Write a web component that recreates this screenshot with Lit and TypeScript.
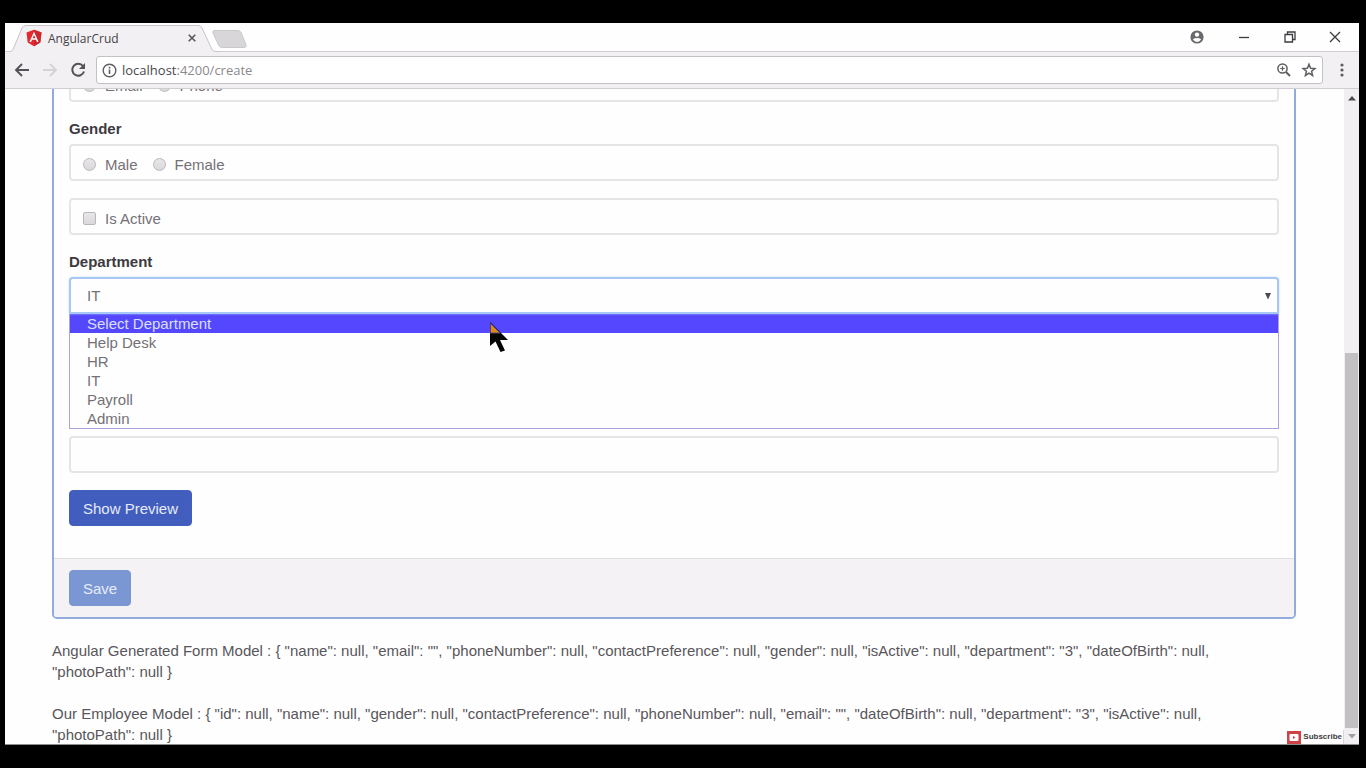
import { LitElement, html, css } from "lit";
import { customElement, property, state } from "lit/decorators.js";

@customElement("browser-bar")
class BrowserBar extends LitElement {
  static styles = css`
    :host {
      display: block;
      flex: none;
      font-family: "Open Sans", "Noto Sans", sans-serif;
    }
    svg {
      display: block;
    }
    button {
      padding: 0;
      border: 0;
      background: none;
      font: inherit;
      color: inherit;
      flex: none;
    }
    .strip {
      display: flex;
      align-items: flex-end;
      height: 28px;
      background: #fefefe;
      border-bottom: 1px solid #cfcdd0;
    }
    .tab {
      position: relative;
      width: 210px;
      height: 28px;
      margin: 0 0 -1px 5px;
    }
    .shape {
      position: absolute;
      inset: 0;
    }
    .tab-row {
      position: relative;
      display: flex;
      align-items: center;
      gap: 6px;
      height: 28px;
      padding: 0 24px 0 16px;
      font-size: 12px;
      color: #454347;
    }
    .title {
      flex: 1;
    }
    .new-tab {
      margin: 0 0 3px -8px;
    }
    .controls {
      display: flex;
      align-items: center;
      gap: 33px;
      height: 28px;
      margin-left: auto;
      padding-right: 18px;
    }
    .toolbar {
      display: flex;
      align-items: center;
      gap: 12px;
      height: 36px;
      padding: 0 10px 0 9px;
      background: #f2f0f3;
      border-bottom: 1px solid #cfcdd0;
    }
    .address {
      display: flex;
      align-items: center;
      gap: 5px;
      flex: 1;
      height: 26px;
      margin: 0 0 0 -2px;
      padding: 0 5px;
      background: #fff;
      border: 1px solid #c3c1c5;
      border-radius: 3px;
    }
    .url {
      flex: 1;
      font-size: 13px;
      color: #8b898d;
    }
    .host {
      color: #4a484c;
    }
    .address .star {
      margin-left: 5px;
    }
  `;

  render() {
    return html`
      <div class="strip">
        <div class="tab">
          <svg class="shape" width="210" height="28" viewBox="0 0 210 28">
            <path d="M0 27.500 Q2 27.500 3 25.500 L12 4 Q13.500 1.500 16 1.500 H188 Q191 1.500 192 4 L202 25.500 Q203 27.500 205 27.500 H209 V28 H0Z" fill="#f2f0f3" />
            <path d="M0 27.500 Q2 27.500 3 25.500 L12 4 Q13.500 1.500 16 1.500 H188 Q191 1.500 192 4 L202 25.500 Q203 27.500 205 27.500 H210" fill="none" stroke="#c6c4c8" />
          </svg>
          <div class="tab-row">
            <svg width="16" height="18" viewBox="0 0 16 18">
              <path d="M8 .8 15.500 3.500 14.300 13.500 8 17.200 1.700 13.500 .5 3.500Z" fill="#e5282e" />
              <path d="M8 .8 15.500 3.500 14.300 13.500 8 17.200Z" fill="#c9282e" />
              <path d="M8 2.700 3.400 13H5.100L6 10.700H10L10.900 13H12.600ZM8 5.900 9.400 9.300H6.600Z" fill="#fff" fill-rule="evenodd" />
            </svg>
            <span class="title">AngularCrud</span>
            <button aria-label="Close tab">
              <svg width="8" height="8" viewBox="0 0 8 8"><path d="M.7.7 7.300 7.300M7.300.7.7 7.300" stroke="#59575b" stroke-width="1.600" /></svg>
            </button>
          </div>
        </div>
        <button class="new-tab" aria-label="New tab">
          <svg width="36" height="18" viewBox="0 0 36 18"><path d="M3 .5H26Q28 .5 29 2.500L34 14.500Q35 17.500 32 17.500H10Q7.500 17.500 6.500 15L1 3Q0 .5 3 .5Z" fill="#d8d6d9" stroke="#cac8cc" /></svg>
        </button>
        <div class="controls">
          <button aria-label="Profile">
            <svg width="14" height="14" viewBox="0 0 14 14">
              <circle cx="7" cy="7" r="6.600" fill="#6b696d" />
              <circle cx="7" cy="4.600" r="2.200" fill="#fff" />
              <path d="M2.800 9.300Q7 6.600 11.200 9.300 9.700 11.900 7 11.900T2.800 9.300Z" fill="#fff" />
            </svg>
          </button>
          <button aria-label="Minimize">
            <svg width="14" height="12" viewBox="0 0 14 12"><path d="M2 6.500H12" stroke="#3d3b3f" stroke-width="1.300" /></svg>
          </button>
          <button aria-label="Restore">
            <svg width="12" height="12" viewBox="0 0 12 12" fill="none" stroke="#3d3b3f" stroke-width="1.300"><path d="M1 3.500H8.500V11H1ZM3.500 3.500V1H11V8.500H8.500" /></svg>
          </button>
          <button aria-label="Close">
            <svg width="12" height="12" viewBox="0 0 12 12"><path d="M1 1 11 11M11 1 1 11" stroke="#3d3b3f" stroke-width="1.300" /></svg>
          </button>
        </div>
      </div>
      <div class="toolbar">
        <button aria-label="Back">
          <svg width="16" height="16" viewBox="0 0 16 16" fill="none" stroke="#545256" stroke-width="1.900"><path d="M15 8H2.500M8 2 2 8 8 14" /></svg>
        </button>
        <button aria-label="Forward">
          <svg width="16" height="16" viewBox="0 0 16 16" fill="none" stroke="#d5d3d6" stroke-width="1.900"><path d="M1 8H13.500M8 2 14 8 8 14" /></svg>
        </button>
        <button aria-label="Reload">
          <svg width="16" height="16" viewBox="0 0 16 16"><path d="M13 4A6 6 0 1 0 14 9.500" fill="none" stroke="#545256" stroke-width="2" /><path d="M15 1V7H9Z" fill="#545256" /></svg>
        </button>
        <div class="address">
          <svg width="15" height="15" viewBox="0 0 15 15">
            <circle cx="7.500" cy="7.500" r="6.300" fill="none" stroke="#5f5d61" stroke-width="1.400" />
            <path d="M7.500 6.500V11M7.500 3.800V5.400" stroke="#5f5d61" stroke-width="1.600" />
          </svg>
          <span class="url"><span class="host">localhost</span>:4200/create</span>
          <svg width="14" height="14" viewBox="0 0 14 14" fill="none" stroke="#5f5d61">
            <circle cx="5.500" cy="5.500" r="4.600" stroke-width="1.500" />
            <path d="M9 9 13 13" stroke-width="2" />
            <path d="M3.300 5.500H7.700M5.500 3.300V7.700" stroke-width="1.200" />
          </svg>
          <button class="star" aria-label="Bookmark">
            <svg width="16" height="16" viewBox="0 0 16 16"><path d="M8 2.200 9.600 6.200 13.900 6.500 10.600 9.300 11.600 13.500 8 11.200 4.400 13.500 5.400 9.300 2.100 6.500 6.400 6.200Z" fill="none" stroke="#5f5d61" stroke-width="1.500" /></svg>
          </button>
        </div>
        <button aria-label="Menu">
          <svg width="14" height="14" viewBox="0 0 14 14" fill="#5f5d61"><circle cx="7" cy="2" r="1.600" /><circle cx="7" cy="7" r="1.600" /><circle cx="7" cy="12" r="1.600" /></svg>
        </button>
      </div>
    `;
  }
}

@customElement("employee-form")
class EmployeeForm extends LitElement {
  @property({ type: Array }) departments: string[] = [];
  @state() private highlighted = 0;

  static styles = css`
    :host {
      display: block;
    }
    .card {
      border: 2px solid #90abdc;
      border-radius: 5px;
      overflow: hidden;
    }
    form {
      display: block;
      margin: 0;
    }
    .body {
      padding: 0 15px 32px;
    }
    fieldset {
      margin: 0;
      padding: 0;
      border: 0;
      min-width: 0;
    }
    .group {
      margin-bottom: 17px;
    }
    .caption {
      display: block;
      padding: 0;
      margin-bottom: 6px;
      line-height: 19px;
      font-weight: bold;
      color: #3d3a3f;
    }
    .box,
    .input,
    .select {
      box-sizing: border-box;
      width: 100%;
      height: 37px;
      border: 2px solid #e6e4e7;
      border-radius: 4px;
      background: #fefefe;
      color: #747176;
      font: inherit;
    }
    .box {
      display: flex;
      align-items: center;
      gap: 15px;
      padding: 3px 12px 0;
    }
    .input {
      display: block;
      padding: 0 12px;
    }
    .option {
      display: flex;
      align-items: center;
      gap: 9px;
    }
    .tick {
      appearance: none;
      width: 13px;
      height: 13px;
      margin: 0;
      border: 1px solid #b9b7bb;
      border-radius: 2px;
      background: linear-gradient(#e8e6e9, #dad8db);
    }
    .tick[type="radio"] {
      border-radius: 50%;
    }
    .picker {
      display: grid;
      align-items: center;
    }
    .select,
    .arrow {
      grid-area: 1 / 1;
    }
    .select {
      appearance: none;
      padding: 0 16px;
      border-color: #a9c7f5;
      border-radius: 4px 4px 0 0;
      outline: 0;
      box-shadow: 0 0 2px #b9d3fa;
    }
    .arrow {
      justify-self: end;
      margin-right: 7px;
      pointer-events: none;
    }
    .menu {
      list-style: none;
      margin: 0 0 7px;
      padding: 0;
      border: 1px solid #aba3da;
      border-top: 0;
      color: #747176;
    }
    .item {
      padding: 0 17px;
      line-height: 19px;
    }
    .item.active {
      background: #5547fe;
      color: #d7e0fd;
    }
    .button {
      box-sizing: border-box;
      height: 36px;
      padding: 0 13px;
      border: 1px solid #4160bd;
      border-radius: 4px;
      background: #415dbe;
      color: #e5ebfa;
      font: inherit;
    }
    .button.save {
      border-color: #7b97d3;
      background: #7b97d3;
    }
    .footer {
      padding: 11px 15px;
      border-top: 1px solid #e0dee2;
      background: #f4f2f5;
    }
  `;

  private choices(name: string, labels: string[]) {
    return html`
      <div class="box">
        ${labels.map(
          (label) => html`<label class="option"><input class="tick" type="radio" name=${name} />${label}</label>`
        )}
      </div>
    `;
  }

  render() {
    return html`
      <form class="card" @submit=${(e: Event) => e.preventDefault()}>
        <div class="body">
          <fieldset class="group" aria-label="Contact Preference">${this.choices("contact", ["Email", "Phone"])}</fieldset>
          <fieldset class="group">
            <legend class="caption">Gender</legend>
            ${this.choices("gender", ["Male", "Female"])}
          </fieldset>
          <div class="box group">
            <label class="option"><input class="tick" type="checkbox" />Is Active</label>
          </div>
          <label class="caption" for="department">Department</label>
          <div class="picker">
            <select class="select" id="department">
              ${this.departments.map((d) => html`<option ?selected=${d === "IT"}>${d}</option>`)}
            </select>
            <svg class="arrow" width="8" height="8" viewBox="0 0 8 8"><path d="M1 1H7L4 7.500Z" fill="#4c4a4e" /></svg>
          </div>
          <ul class="menu" role="listbox" aria-label="Department">
            ${this.departments.map(
              (d, i) => html`<li
                class="item ${i === this.highlighted ? "active" : ""}"
                role="option"
                @mouseenter=${() => (this.highlighted = i)}
              >${d}</li>`
            )}
          </ul>
          <input class="input group" type="text" aria-label="Photo Path" />
          <button class="button" type="button">Show Preview</button>
        </div>
        <div class="footer"><button class="button save" type="submit" disabled>Save</button></div>
      </form>
    `;
  }
}

@customElement("app-root")
class AppRoot extends LitElement {
  private departments = ["Select Department", "Help Desk", "HR", "IT", "Payroll", "Admin"];

  static styles = css`
    :host {
      display: flex;
      box-sizing: border-box;
      height: 100vh;
      padding: 23px 7px 23px 5px;
      background: #000;
      position: relative;
    }
    svg {
      display: block;
    }
    .window {
      display: flex;
      flex-direction: column;
      flex: 1;
      min-width: 0;
      background: #fefefe;
    }
    .viewport {
      display: flex;
      flex: 1;
      min-height: 0;
      overflow: hidden;
      border-bottom: 1px solid #8f8d90;
    }
    .page {
      flex: 1;
      min-width: 0;
      margin-top: -26px;
      padding: 0 48px 0 47px;
      font: 15px/21px "Liberation Sans", Arial, sans-serif;
      color: #59565b;
    }
    .models {
      padding: 21px 20px 0 0;
    }
    .model {
      margin: 0 0 21px;
    }
    .scroll {
      display: flex;
      flex-direction: column;
      align-items: center;
      width: 15px;
      padding: 6px 0 5px;
      background: #f1eff2;
    }
    .track {
      display: flex;
      align-items: flex-end;
      flex: 1;
      margin: 2px 0 5px;
    }
    .thumb {
      width: 13px;
      height: 60%;
      background: #c2c0c3;
    }
    .pointer {
      position: absolute;
      left: 489px;
      top: 321px;
      pointer-events: none;
    }
    .subscribe {
      position: absolute;
      right: 22px;
      bottom: 24px;
      display: flex;
      align-items: center;
      gap: 2px;
      height: 14px;
      padding: 0 1px 0 0;
      border: 0;
      border-right: 1px solid #d8d6d9;
      background: #fefefe;
      color: #3d3b3f;
      font: bold 8px/14px "Liberation Sans Narrow", "Liberation Sans", sans-serif;
    }
  `;

  render() {
    return html`
      <div class="window">
        <browser-bar></browser-bar>
        <div class="viewport">
          <main class="page">
            <employee-form .departments=${this.departments}></employee-form>
            <div class="models">
              <p class="model">Angular Generated Form Model : { "name": null, "email": "", "phoneNumber": null, "contactPreference": null, "gender": null, "isActive": null, "department": "3", "dateOfBirth": null, "photoPath": null }</p>
              <p class="model">Our Employee Model : { "id": null, "name": null, "gender": null, "contactPreference": null, "phoneNumber": null, "email": "", "dateOfBirth": null, "department": "3", "isActive": null, "photoPath": null }</p>
            </div>
          </main>
          <div class="scroll">
            <svg width="8" height="6" viewBox="0 0 8 6"><path d="M0 5.500 4 1 8 5.500Z" fill="#4c4a4e" /></svg>
            <div class="track"><div class="thumb"></div></div>
            <svg width="8" height="6" viewBox="0 0 8 6"><path d="M0 1 4 5.500 8 1Z" fill="#a09ea2" /></svg>
          </div>
        </div>
      </div>
      <svg class="pointer" width="22" height="34" viewBox="0 0 22 34">
        <path d="M1 1V25L6.500 20.500 11.500 31 16 29.500 11 19H19Z" fill="#050505" />
        <path d="M1.500 2.500V12H11Z" fill="#e08a14" stroke="#4f4a6b" />
      </svg>
      <button class="subscribe">
        <svg width="14" height="13" viewBox="0 0 14 13"><rect width="14" height="13" fill="#cf4247" /><rect x="2.500" y="3" width="9" height="7" rx="1" fill="#fff" /><path d="M6 5V8L8.500 6.500Z" fill="#cf4247" /></svg>
        <span>Subscribe</span>
      </button>
    `;
  }
}
